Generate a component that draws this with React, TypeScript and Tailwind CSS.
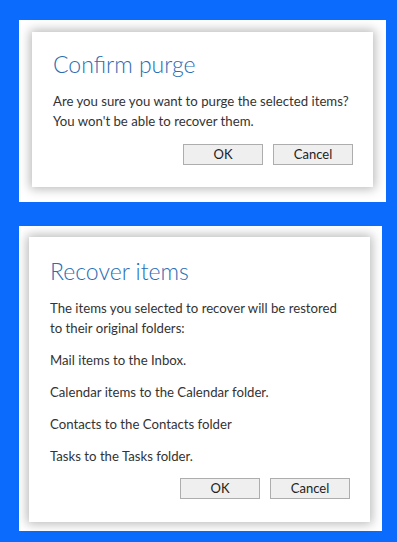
const font = { fontFamily: 'Lato, "Open Sans", sans-serif' };

const Btn = ({ label }: { label: string }) => (
  <button className="h-[21px] w-[80px] border border-[#adadad] bg-[#efefef] text-[13px] leading-none text-[#222]">
    {label}
  </button>
);

const Dialog = ({ title, lines }: { title: string; lines: string[][] }) => (
  <div className="flex h-full flex-col bg-white pl-[21px] pr-[20px] shadow-[0_0_10px_2px_rgba(0,0,0,0.28)]">
    <h2 className="text-[23px] font-light leading-[30px] text-[#2a6db3]">{title}</h2>
    <div className="mt-[12px] flex flex-col gap-[12px] whitespace-nowrap text-[13.2px] leading-[20px] text-[#333]">
      {lines.map((p, i) => (
        <p key={i}>
          {p.map((l, j) => (
            <span key={j} className="block">
              {l}
            </span>
          ))}
        </p>
      ))}
    </div>
    <div className="mt-auto flex justify-end gap-[10px]">
      <Btn label="OK" />
      <Btn label="Cancel" />
    </div>
  </div>
);

export default function App() {
  return (
    <div className="h-[542px] w-[397px] bg-[#0a6bfd] pt-[20px]" style={font}>
      <div className="ml-[19px] h-[182px] w-[367px] bg-white pb-[15px] pl-[13px] pr-[13px] pt-[12px]">
        <div className="h-full [&>div]:pb-[22px] [&>div]:pt-[17px]">
          <Dialog
            title="Confirm purge"
            lines={[["Are you sure you want to purge the selected items?", "You won't be able to recover them."]]}
          />
        </div>
      </div>
      <div className="ml-[19px] mt-[24px] h-[305px] w-[363px] bg-white pb-[9px] pl-[10px] pr-[12px] pt-[11px]">
        <div className="h-full [&>div]:pb-[23px] [&>div]:pt-[19px]">
          <Dialog
            title="Recover items"
            lines={[
              ["The items you selected to recover will be restored", "to their original folders:"],
              ["Mail items to the Inbox."],
              ["Calendar items to the Calendar folder."],
              ["Contacts to the Contacts folder"],
              ["Tasks to the Tasks folder."],
            ]}
          />
        </div>
      </div>
    </div>
  );
}
